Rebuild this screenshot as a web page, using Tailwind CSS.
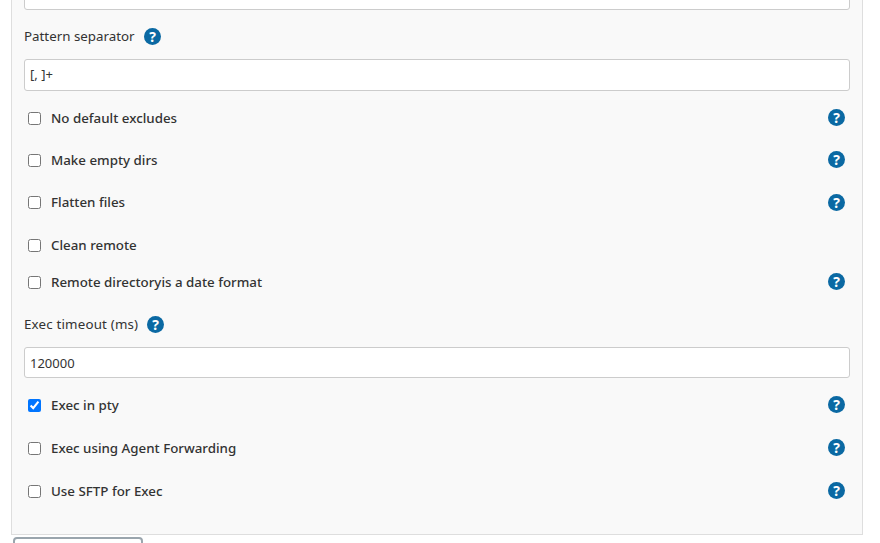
<!DOCTYPE html>
<html lang="en">
<head>
  <meta charset="UTF-8">
  <title>Publish over SSH</title>
  <script src="https://cdn.jsdelivr.net/npm/@tailwindcss/browser@4"></script>
</head>
<body class="bg-white text-[#333] text-[13.33px] h-[543px] w-[880px] overflow-hidden font-['Noto_Sans',sans-serif]">

<div class="ml-[11px] w-[852px] h-[535px] bg-[#f9f9f9] border-x border-b border-[#dedede] px-[12px] overflow-hidden">
  <!-- Previous field (scrolled off) -->
  <div class="h-[11px] -mt-px bg-white border border-[#ccc] rounded-b-[3px]"></div>

  <div class="h-[49px] pt-[3px] flex items-center gap-[9px]">
    <span class="mt-[2px]">Pattern separator</span>
    <svg class="w-[17px] h-[17px]" viewBox="0 0 17 17"><circle cx="8.5" cy="8.5" r="8.5" fill="#0b69a3"/><text x="8.5" y="13.5" text-anchor="middle" font-size="14" font-weight="700" fill="#fff" font-family="Noto Sans">?</text></svg>
  </div>
  <input type="text" value="[, ]+" class="block w-full h-[32px] bg-white border border-[#ccc] rounded-[3px] px-[5px] pb-[2px] text-[13px]">

  <div class="mt-[5px]">
    <div class="h-[42px] flex items-center justify-between pr-[5px]">
      <label class="flex items-center gap-[10px] pl-[4px] mt-[3px]"><input type="checkbox" class="w-[13px] h-[13px]"><span class="font-medium">No default excludes</span></label>
      <svg class="w-[17px] h-[17px]" viewBox="0 0 17 17"><circle cx="8.5" cy="8.5" r="8.5" fill="#0b69a3"/><text x="8.5" y="13.5" text-anchor="middle" font-size="14" font-weight="700" fill="#fff" font-family="Noto Sans">?</text></svg>
    </div>
    <div class="h-[42px] flex items-center justify-between pr-[5px]">
      <label class="flex items-center gap-[10px] pl-[4px] mt-[3px]"><input type="checkbox" class="w-[13px] h-[13px]"><span class="font-medium">Make empty dirs</span></label>
      <svg class="w-[17px] h-[17px]" viewBox="0 0 17 17"><circle cx="8.5" cy="8.5" r="8.5" fill="#0b69a3"/><text x="8.5" y="13.5" text-anchor="middle" font-size="14" font-weight="700" fill="#fff" font-family="Noto Sans">?</text></svg>
    </div>
    <div class="h-[44px] flex items-center justify-between pr-[5px]">
      <label class="flex items-center gap-[10px] pl-[4px] mt-[2px]"><input type="checkbox" class="w-[13px] h-[13px]"><span class="font-medium">Flatten files</span></label>
      <svg class="w-[17px] h-[17px]" viewBox="0 0 17 17"><circle cx="8.5" cy="8.5" r="8.5" fill="#0b69a3"/><text x="8.5" y="13.5" text-anchor="middle" font-size="14" font-weight="700" fill="#fff" font-family="Noto Sans">?</text></svg>
    </div>
    <div class="h-[42px] flex items-center">
      <label class="flex items-center gap-[10px] pl-[4px] mt-[2px]"><input type="checkbox" class="w-[13px] h-[13px]"><span class="font-medium">Clean remote</span></label>
    </div>
    <div class="h-[32px] flex items-center justify-between pr-[5px]">
      <label class="flex items-center gap-[10px] pl-[4px] mt-[2px]"><input type="checkbox" class="w-[13px] h-[13px]"><span class="font-medium">Remote directoryis a date format</span></label>
      <svg class="w-[17px] h-[17px] mb-[2px]" viewBox="0 0 17 17"><circle cx="8.5" cy="8.5" r="8.5" fill="#0b69a3"/><text x="8.5" y="13.5" text-anchor="middle" font-size="14" font-weight="700" fill="#fff" font-family="Noto Sans">?</text></svg>
    </div>
  </div>

  <div class="h-[49px] pt-[3px] flex items-center gap-[9px]">
    <span class="mt-[2px] tracking-[0.18px]">Exec timeout (ms)</span>
    <svg class="w-[17px] h-[17px]" viewBox="0 0 17 17"><circle cx="8.5" cy="8.5" r="8.5" fill="#0b69a3"/><text x="8.5" y="13.5" text-anchor="middle" font-size="14" font-weight="700" fill="#fff" font-family="Noto Sans">?</text></svg>
  </div>
  <input type="text" value="120000" class="block w-full h-[31px] bg-white border border-[#ccc] rounded-[3px] px-[5px] text-[13px]">

  <div class="mt-[5px]">
    <div class="h-[43px] flex items-center justify-between pr-[5px]">
      <label class="flex items-center gap-[10px] pl-[4px] mt-[2px]"><input type="checkbox" checked class="w-[13px] h-[13px] accent-[#0075ff]"><span class="font-medium">Exec in pty</span></label>
      <svg class="w-[17px] h-[17px]" viewBox="0 0 17 17"><circle cx="8.5" cy="8.5" r="8.5" fill="#0b69a3"/><text x="8.5" y="13.5" text-anchor="middle" font-size="14" font-weight="700" fill="#fff" font-family="Noto Sans">?</text></svg>
    </div>
    <div class="h-[43px] flex items-center justify-between pr-[5px]">
      <label class="flex items-center gap-[10px] pl-[4px] mt-[2px]"><input type="checkbox" class="w-[13px] h-[13px]"><span class="font-medium">Exec using Agent Forwarding</span></label>
      <svg class="w-[17px] h-[17px]" viewBox="0 0 17 17"><circle cx="8.5" cy="8.5" r="8.5" fill="#0b69a3"/><text x="8.5" y="13.5" text-anchor="middle" font-size="14" font-weight="700" fill="#fff" font-family="Noto Sans">?</text></svg>
    </div>
    <div class="h-[43px] flex items-center justify-between pr-[5px]">
      <label class="flex items-center gap-[10px] pl-[4px] mt-[2px]"><input type="checkbox" class="w-[13px] h-[13px]"><span class="font-medium">Use SFTP for Exec</span></label>
      <svg class="w-[17px] h-[17px]" viewBox="0 0 17 17"><circle cx="8.5" cy="8.5" r="8.5" fill="#0b69a3"/><text x="8.5" y="13.5" text-anchor="middle" font-size="14" font-weight="700" fill="#fff" font-family="Noto Sans">?</text></svg>
    </div>
  </div>
</div>

<!-- Button below the panel, cut off by the window -->
<div class="ml-[13px] mt-[2px] w-[130px] h-[10px] bg-white border-2 border-[#9aa5ad] rounded-[4px]"></div>

</body>
</html>
